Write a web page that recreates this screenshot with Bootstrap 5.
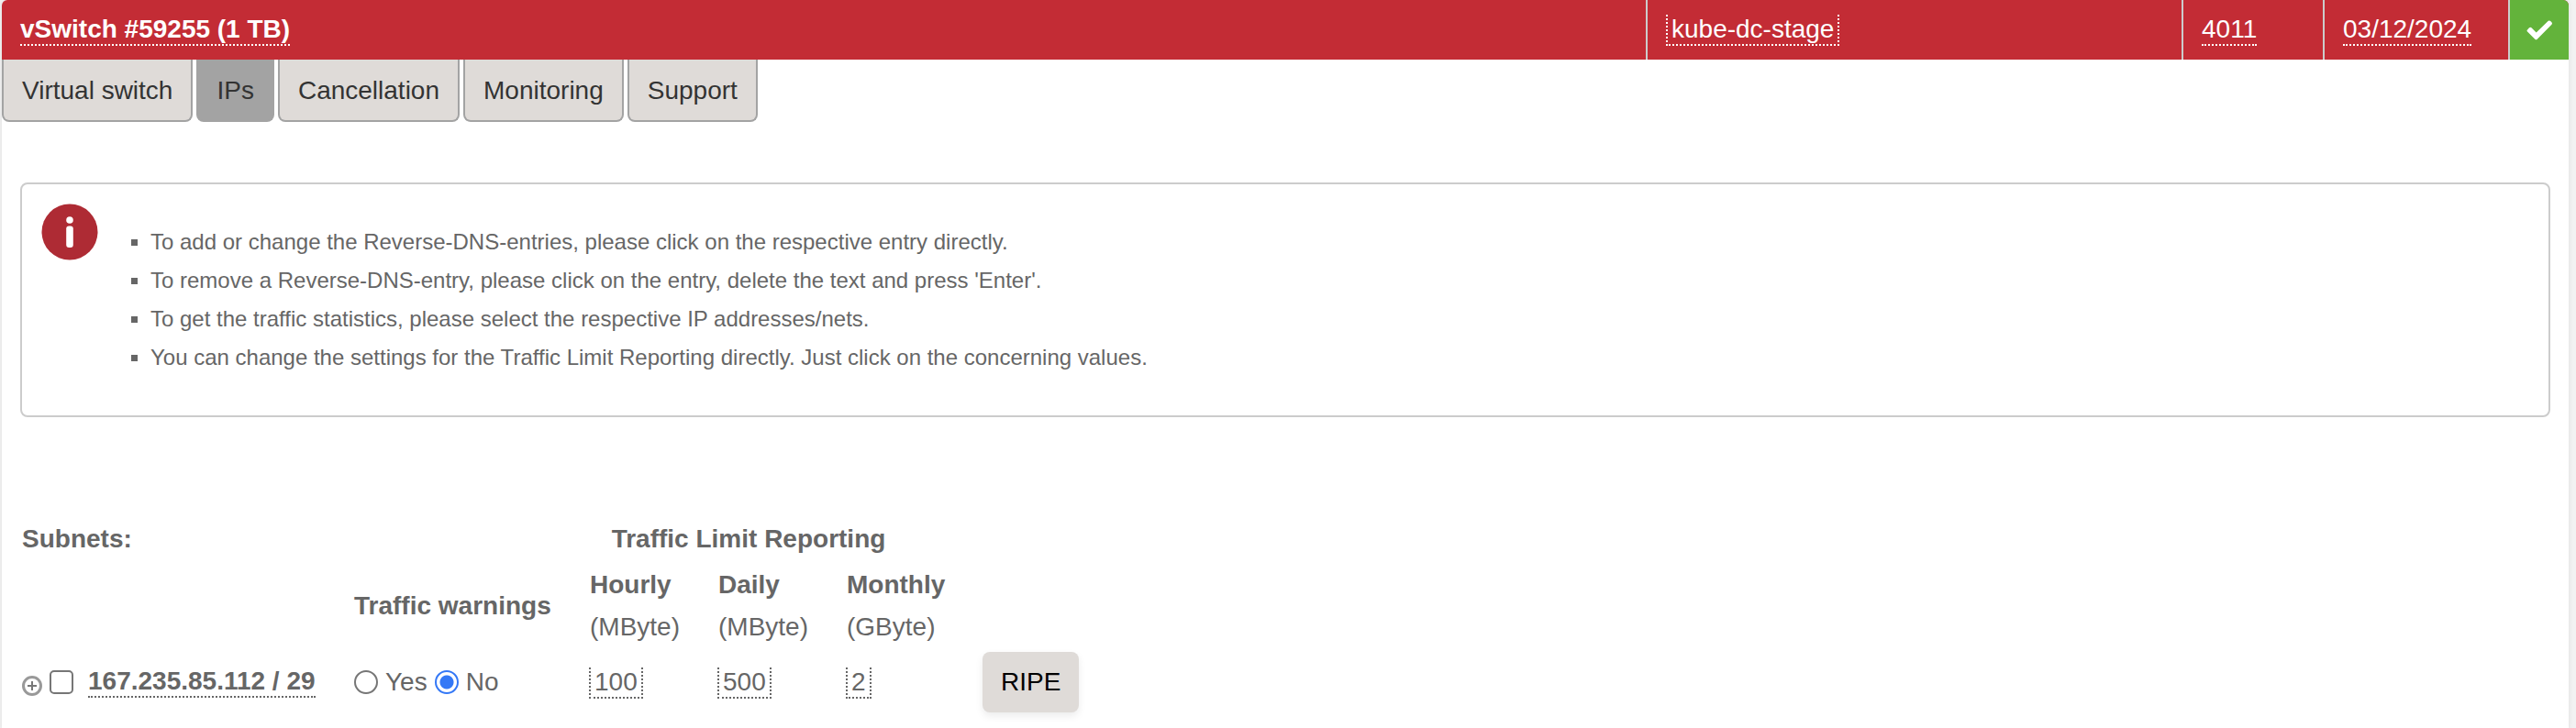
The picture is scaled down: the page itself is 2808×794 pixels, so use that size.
<!DOCTYPE html>
<html lang="en">
<head>
<meta charset="utf-8">
<meta name="viewport" content="width=device-width, initial-scale=1">
<title>vSwitch #59255 – IPs</title>
<link href="https://cdn.jsdelivr.net/npm/bootstrap@5.3.0/dist/css/bootstrap.min.css" rel="stylesheet">
<style>
  body { background: #f2f2f2; color: #666; font-family: "Liberation Sans", Arial, sans-serif; font-size: 28px; line-height: 46px; }
  a { color: inherit; text-decoration: none; }
  .panel { margin: 0 8px 0 2px; min-height: 100vh; background: #fff; border-radius: 6px 6px 0 0; box-shadow: 0 0 4px 1px #e4e4e4; }
  .panel-head { display: grid; grid-template-columns: 1792fr 584fr 154fr 202fr 66px; height: 65px; background: #c32c35; color: #fff; border-radius: 6px 6px 0 0; overflow: hidden; }
  .head-cell { display: flex; align-items: center; padding: 0 20px; }
  .head-cell + .head-cell { border-left: 2px solid #ccc; }
  .head-cell.head-state { background: #63b33b; padding: 0; justify-content: center; }
  .editable { display: inline-block; line-height: 32px; border-bottom: 2px dotted currentColor; white-space: nowrap; }
  .editable-box { border-left: 2px dotted currentColor; border-right: 2px dotted currentColor; padding: 0 4px; }
  .tabs { gap: 4px; }
  .tabs .nav-link { padding: 0 20px; height: 68px; line-height: 68px; color: #333; background: #dfdbd8; border: 2px solid #a3a3a3; border-top: 0; border-radius: 0 0 8px 8px; }
  .tabs .nav-link.active { background: #a3a3a3; }
  .hint { display: flex; margin: 66px 20px 108px; padding: 21px 21px 42px; border: 2px solid #ccc; border-radius: 8px; font-size: 24px; line-height: 42px; }
  .hint ul { list-style: none; margin: 21px 0 0; padding: 0 0 0 36px; }
  .hint li { display: flex; align-items: center; gap: 14px; }
  .hint li::before { content: ""; flex: none; width: 7px; height: 7px; background: #666; }
  .subnets { margin-left: 20px; table-layout: fixed; width: auto; }
  .subnets td, .subnets th { padding: 0 2px; vertical-align: middle; white-space: nowrap; }
  .col-net { width: 362px; } .col-warn { width: 257px; } .col-limit { width: 140px; } .col-last { width: 148px; } .col-act { width: 110px; }
  .row-title { height: 50px; } .row-units { height: 96px; } .row-data { height: 70px; }
  .subnets .limit-title { padding-right: 80px; text-align: center; }
  .subnets .limit-cell { padding: 0 1px; }
  .tick { appearance: none; flex: none; width: 26px; height: 26px; margin: 0; border: 2px solid #767676; border-radius: 5px; background: #fff; }
  .tick[type=radio] { border-radius: 50%; }
  .tick[type=radio]:checked { border-color: #3478f6; background: radial-gradient(circle, #3478f6 7px, #fff 8px); }
  .btn-ripe { padding: 0 20px; height: 66px; line-height: 66px; font-size: 28px; color: #000; background: #dfdbd8; border: 0; border-radius: 8px; box-shadow: 0 4px 8px rgba(0,0,0,.08); }
  .expander { line-height: 0; padding: 0; border: 0; background: none; }
</style>
</head>
<body>
<main class="panel">
  <header class="panel-head">
    <div class="head-cell"><a href="#" class="editable fw-bold">vSwitch #59255 (1 TB)</a></div>
    <div class="head-cell"><a href="#" class="editable editable-box">kube-dc-stage</a></div>
    <div class="head-cell"><a href="#" class="editable">4011</a></div>
    <div class="head-cell"><a href="#" class="editable">03/12/2024</a></div>
    <div class="head-cell head-state">
      <svg width="28" height="22" viewBox="0 0 28 22" role="img" aria-label="Ready"><path d="M1 10.500L3 8.300Q4.300 7.200 5.500 8.300L10.700 13.600L23.800 .8Q25 0 26.200 .9L27.600 2.500Q28.400 3.500 27.500 4.700L11.700 20.800Q10.500 21.800 9.300 20.800L1 12.500Q0 11.500 1 10.500Z" fill="#fff"/></svg>
    </div>
  </header>

  <nav class="nav tabs">
    <a class="nav-link" href="#">Virtual switch</a>
    <a class="nav-link active" aria-current="page" href="#">IPs</a>
    <a class="nav-link" href="#">Cancellation</a>
    <a class="nav-link" href="#">Monitoring</a>
    <a class="nav-link" href="#">Support</a>
  </nav>

  <section class="hint">
    <svg class="flex-shrink-0" width="62" height="62" viewBox="0 0 62 62" aria-hidden="true"><circle cx="31" cy="31" r="30.500" fill="#ae2b34"/><circle cx="31" cy="18" r="3.800" fill="#fff"/><rect x="27.200" y="24.500" width="7.600" height="23.500" rx="3" fill="#fff"/></svg>
    <ul>
      <li>To add or change the Reverse-DNS-entries, please click on the respective entry directly.</li>
      <li>To remove a Reverse-DNS-entry, please click on the entry, delete the text and press 'Enter'.</li>
      <li>To get the traffic statistics, please select the respective IP addresses/nets.</li>
      <li>You can change the settings for the Traffic Limit Reporting directly. Just click on the concerning values.</li>
    </ul>
  </section>

  <table class="subnets">
    <colgroup><col class="col-net"><col class="col-warn"><col class="col-limit"><col class="col-limit"><col class="col-last"><col class="col-act"></colgroup>
    <thead>
      <tr class="row-title">
        <th scope="col">Subnets:</th>
        <td></td>
        <th colspan="3" scope="colgroup" class="limit-title">Traffic Limit Reporting</th>
        <td></td>
      </tr>
      <tr class="row-units">
        <td></td>
        <th scope="col">Traffic warnings</th>
        <th scope="col">Hourly<br><span class="fw-normal">(MByte)</span></th>
        <th scope="col">Daily<br><span class="fw-normal">(MByte)</span></th>
        <th scope="col">Monthly<br><span class="fw-normal">(GByte)</span></th>
        <td></td>
      </tr>
    </thead>
    <tbody>
      <tr class="row-data">
        <td>
          <div class="d-flex align-items-center">
            <button type="button" class="expander mt-2 me-2" aria-label="Expand subnet">
              <svg width="22" height="22" viewBox="0 0 22 22"><circle cx="11" cy="11" r="9.500" fill="none" stroke="#999" stroke-width="3"/><path d="M11 6v10M6 11h10" stroke="#777" stroke-width="2"/></svg>
            </button>
            <input class="tick me-3" type="checkbox" id="net" aria-label="Select 167.235.85.112 / 29">
            <a href="#" class="editable fw-bold">167.235.85.112 / 29</a>
          </div>
        </td>
        <td>
          <div class="d-flex align-items-center gap-2">
            <input class="tick" type="radio" name="warn" id="warn-yes"><label for="warn-yes">Yes</label>
            <input class="tick" type="radio" name="warn" id="warn-no" checked><label for="warn-no">No</label>
          </div>
        </td>
        <td class="limit-cell"><a href="#" class="editable editable-box">100</a></td>
        <td class="limit-cell"><a href="#" class="editable editable-box">500</a></td>
        <td class="limit-cell"><a href="#" class="editable editable-box">2</a></td>
        <td><button type="button" class="btn btn-ripe">RIPE</button></td>
      </tr>
    </tbody>
  </table>
</main>
<script src="https://cdn.jsdelivr.net/npm/bootstrap@5.3.0/dist/js/bootstrap.bundle.min.js"></script>
</body>
</html>
